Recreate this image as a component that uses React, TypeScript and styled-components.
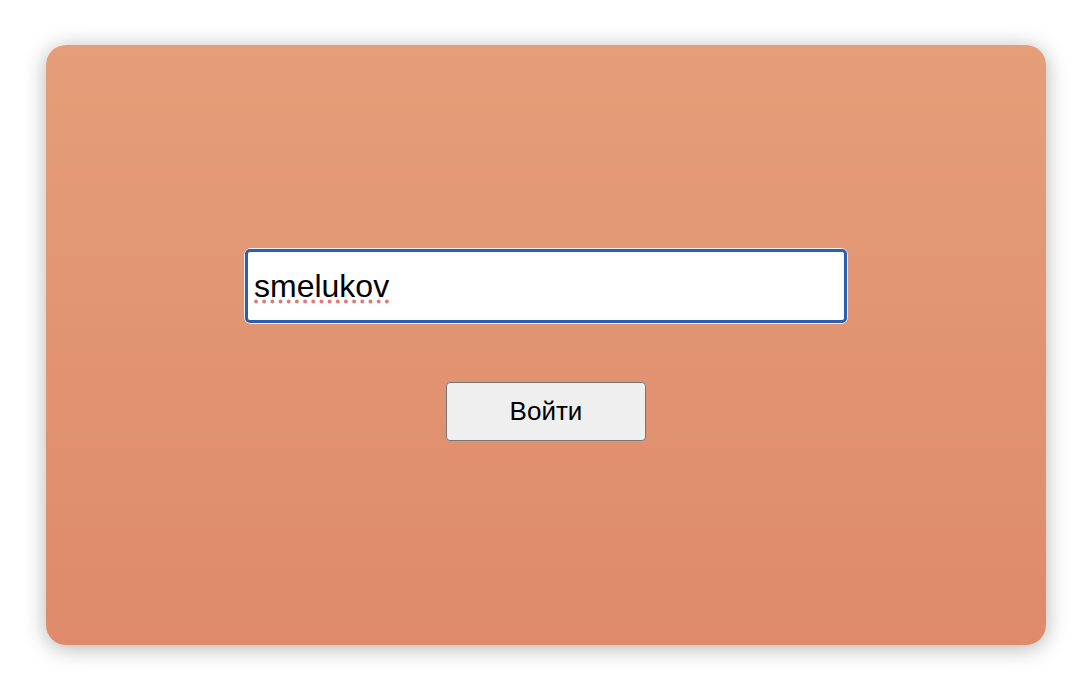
import React from "react";
import styled, { createGlobalStyle } from "styled-components";

const Global = createGlobalStyle`
  html, body { margin: 0; padding: 0; background: #ffffff; }
  body { font-family: "Liberation Sans", Arial, sans-serif; }
  * { box-sizing: border-box; }
`;

const Page = styled.div`
  width: 1086px;
  height: 692px;
  padding: 45px 40px 47px 46px;
  display: flex;
  align-items: flex-start;
`;

const Card = styled.div`
  width: 1000px;
  height: 600px;
  border-radius: 20px;
  background: linear-gradient(180deg, #e59e79 0%, #de8a6b 100%);
  box-shadow: 0 3px 22px rgba(0, 0, 0, 0.3);
  display: flex;
  flex-direction: column;
  align-items: center;
  justify-content: center;
  gap: 59px;
`;

const FieldWrap = styled.div`
  position: relative;
  width: 602px;
  height: 74px;
  border-radius: 6px;
  box-shadow: 0 0 0 1px rgba(255, 255, 255, 0.85);
`;

const Field = styled.input`
  width: 100%;
  height: 100%;
  border: 3px solid #2c5fb3;
  border-radius: 5px;
  outline: none;
  background: #ffffff;
  padding: 0 6px;
  font-family: "Liberation Sans", Arial, sans-serif;
  font-size: 32px;
  color: #000000;
`;

const Squiggle = styled.span`
  position: absolute;
  left: 9px;
  top: 50%;
  transform: translateY(-50%);
  font-family: "Liberation Sans", Arial, sans-serif;
  font-size: 32px;
  color: transparent;
  pointer-events: none;
  text-decoration: underline dotted #e07a7a;
  text-decoration-thickness: 4px;
  text-underline-offset: 3px;
`;

const Button = styled.button`
  width: 200px;
  height: 59px;
  background: #efefef;
  border: 1px solid #767676;
  border-radius: 4px;
  font-family: "Liberation Sans", Arial, sans-serif;
  font-size: 26px;
  color: #000000;
  cursor: pointer;
`;

export default function App() {
  return (
    <>
      <Global />
      <Page>
        <Card>
          <FieldWrap>
            <Field defaultValue="smelukov" spellCheck={false} />
            <Squiggle aria-hidden="true">smelukov</Squiggle>
          </FieldWrap>
          <Button>Войти</Button>
        </Card>
      </Page>
    </>
  );
}
